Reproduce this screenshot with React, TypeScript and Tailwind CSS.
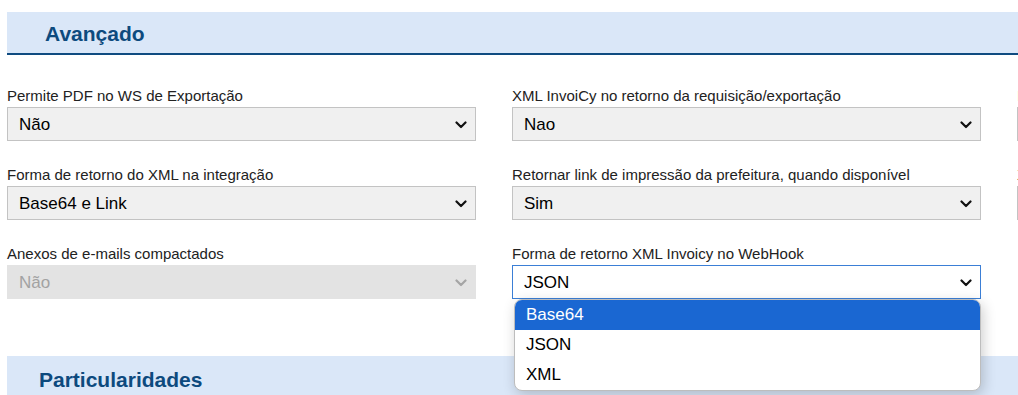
const font = { fontFamily: '"Liberation Sans", Arial, sans-serif' };

interface FieldProps {
  label: string;
  value: string;
  disabled?: boolean;
  focused?: boolean;
}

const Chevron = ({ color }: { color: string }) => (
  <svg width="12" height="8" viewBox="0 0 12 8" className="shrink-0">
    <path d="M1.5 1.5 L6 6 L10.5 1.5" fill="none" stroke={color} strokeWidth="2.2" strokeLinecap="round" strokeLinejoin="round" />
  </svg>
);

const Field = ({ label, value, disabled, focused }: FieldProps) => {
  let box = "bg-[#f0f0f0] border-[#c3c3c3] text-black";
  if (disabled) box = "bg-[#e3e3e3] border-[#e3e3e3] text-[#a2a2a2]";
  if (focused) box = "bg-white border-[#3b7fd6] text-black";
  return (
    <div className="flex flex-col">
      <div className="text-[15px] leading-[17px] h-[17px] text-[#222] whitespace-nowrap">{label}</div>
      <div className={`mt-[3px] h-[34px] border flex items-center justify-between pl-[11px] pr-[8px] pt-[2px] text-[17px] ${box}`}>
        <span>{value}</span>
        <Chevron color={disabled ? "#a5a5a5" : "#111"} />
      </div>
    </div>
  );
};

export default function App() {
  return (
    <div className="w-[1018px] h-[395px] overflow-hidden bg-white pl-[7px] pt-[12px]" style={font}>
      <div className="h-[43px] bg-[#dae7f8] border-b-2 border-[#0f4b80] flex items-center pl-[38px] pt-[2px]">
        <span className="text-[21px] font-bold text-[#0d4a7e]">Avançado</span>
      </div>
      <div className="grid grid-cols-[469px_469px_469px] gap-x-[36px] gap-y-[25px] mt-[32px]">
        <Field label="Permite PDF no WS de Exportação" value="Não" />
        <Field label="XML InvoiCy no retorno da requisição/exportação" value="Nao" />
        <Field label="Imprimir logotipo do prestador" value="Sim" />
        <Field label="Forma de retorno do XML na integração" value="Base64 e Link" />
        <Field label="Retornar link de impressão da prefeitura, quando disponível" value="Sim" />
        <Field label="XML do cancelamento" value="Não" />
        <Field label="Anexos de e-mails compactados" value="Não" disabled />
        <div className="relative">
          <Field label="Forma de retorno XML Invoicy no WebHook" value="JSON" focused />
          <div className="absolute left-[2px] top-[54px] w-[467px] bg-white rounded-[8px] border border-[#bdbdbd] shadow-[2px_4px_14px_rgba(0,0,0,0.2)] overflow-hidden z-10 text-[17px]">
            <div className="h-[30px] flex items-center pl-[11px] bg-[#1a67d2] text-white">Base64</div>
            <div className="h-[30px] flex items-center pl-[11px] text-black">JSON</div>
            <div className="h-[30px] flex items-center pl-[11px] text-black">XML</div>
          </div>
        </div>
        <div />
      </div>
      <div className="mt-[57px]">
        <div className="h-[45px] bg-[#dae7f8] flex items-start pt-[13px] pl-[32px]">
          <span className="text-[21px] font-bold leading-[22px] text-[#0d4a7e]">Particularidades</span>
        </div>
      </div>
    </div>
  );
}
